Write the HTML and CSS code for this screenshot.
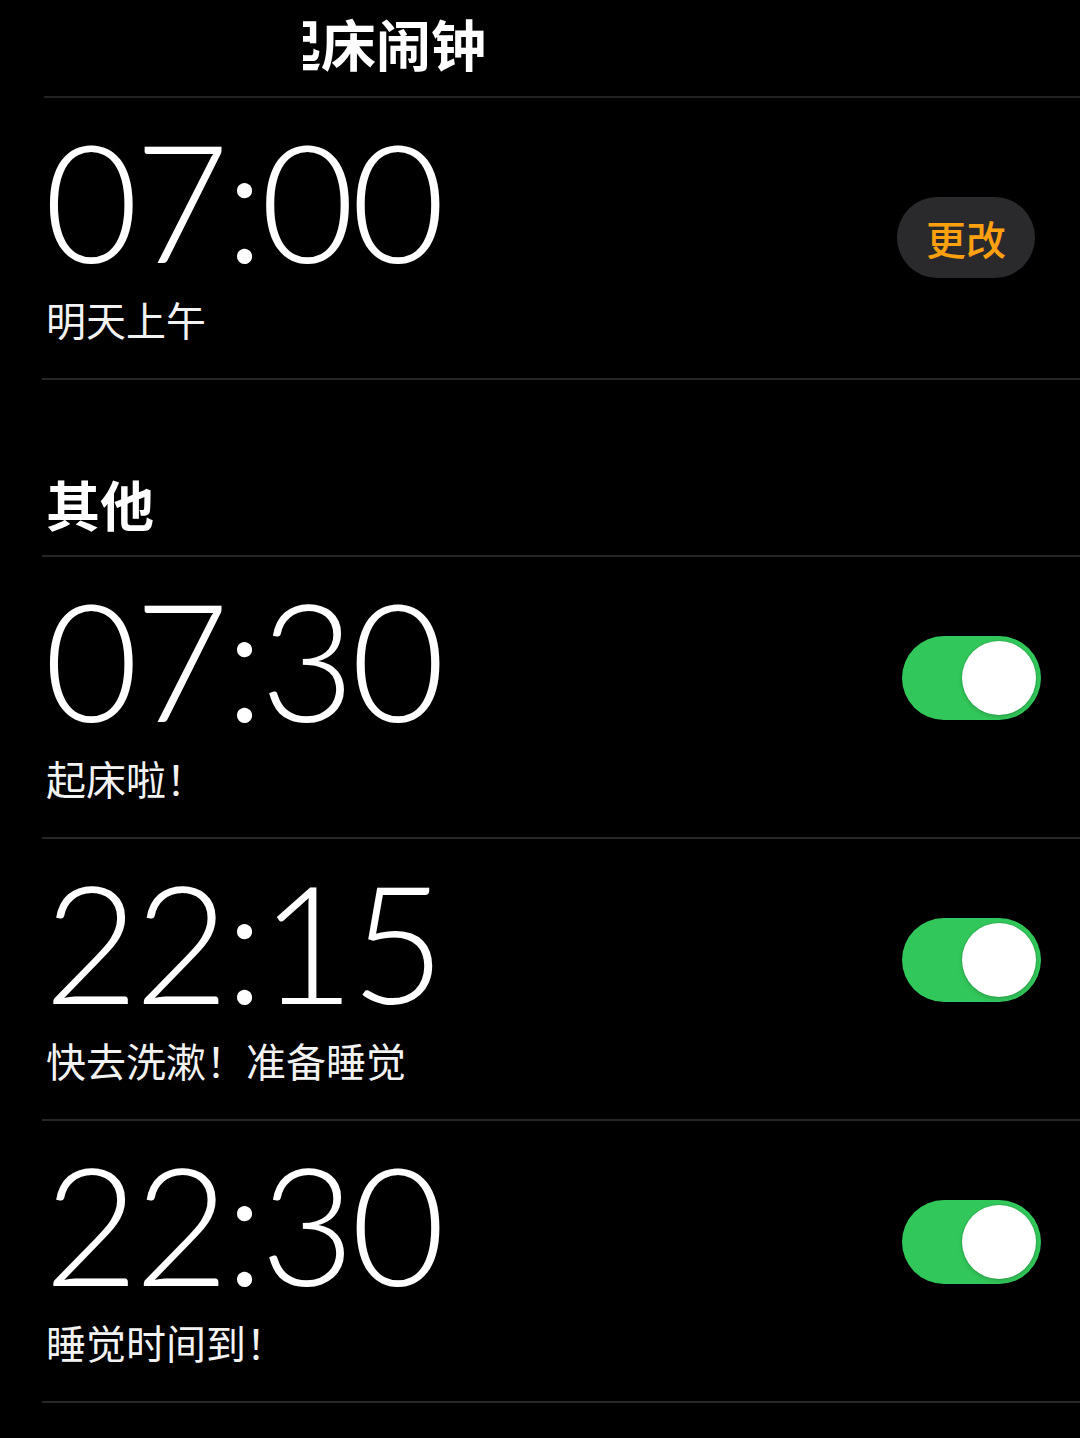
FILE: index.html
```html
<!DOCTYPE html>
<html lang="zh-CN">
<head>
<meta charset="utf-8">
<title>起床闹钟</title>
<link rel="stylesheet" href="styles.css">
</head>
<body>
<div class="screen">
  <header class="nav">
    <h1 class="title">起床闹钟</h1>
    <div class="mask"></div>
  </header>

  <div class="list">
    <div class="row first">
      <div class="info">
        <div class="time">07:00</div>
        <div class="label">明天上午</div>
      </div>
      <button class="change">更改</button>
    </div>
  </div>

  <h2 class="section">其他</h2>

  <div class="list">
    <div class="row">
      <div class="info">
        <div class="time">07:30</div>
        <div class="label">起床啦！</div>
      </div>
      <div class="toggle"><span class="knob"></span></div>
    </div>
    <div class="row">
      <div class="info">
        <div class="time">22:15</div>
        <div class="label">快去洗漱！准备睡觉</div>
      </div>
      <div class="toggle"><span class="knob"></span></div>
    </div>
    <div class="row last">
      <div class="info">
        <div class="time">22:30</div>
        <div class="label">睡觉时间到！</div>
      </div>
      <div class="toggle"><span class="knob"></span></div>
    </div>
  </div>
</div>
</body>
</html>
```

FILE: styles.css
```css
html, body {
  margin: 0;
  padding: 0;
  background: #000;
}

.screen {
  width: 1080px;
  min-height: 1438px;
  background: #000;
  color: #fff;
  font-family: "Noto Sans CJK SC", "Noto Sans", sans-serif;
  overflow: hidden;
}

.nav {
  position: relative;
  height: 96px;
  margin-left: 44px;
  border-bottom: 2px solid #222;
}

.title {
  margin: 0;
  padding-left: 222px;
  font-size: 55px;
  font-weight: 700;
  line-height: 84px;
  letter-spacing: 0;
}

.mask {
  position: absolute;
  left: -44px;
  top: 0;
  width: 303px;
  height: 94px;
  background: #000;
}

.list {
  margin-left: 42px;
}

.row {
  display: flex;
  align-items: flex-start;
  justify-content: space-between;
  padding: 4px 0 33px 4px;
  border-top: 2px solid #262626;
}

.row.first {
  border-top: none;
  border-bottom: 2px solid #262626;
}

.row.last {
  border-bottom: 2px solid #262626;
}

.info {
  display: flex;
  flex-direction: column;
}

.time {
  font-family: "Lato", "Liberation Sans", sans-serif;
  font-weight: 300;
  font-size: 163px;
  line-height: 196px;
  letter-spacing: -4px;
  margin-left: -2px;
  font-variant-numeric: tabular-nums;
}

.label {
  margin-top: 2px;
  font-family: "Liberation Sans", "Noto Sans CJK SC", sans-serif;
  font-size: 40px;
  line-height: 45px;
  font-weight: 400;
  color: #f2f2f2;
}

.change {
  width: 138px;
  height: 81px;
  margin-right: 45px;
  margin-top: 95px;
  border: none;
  border-radius: 41px;
  background: #2a2a2c;
  color: #ffa00f;
  font-family: "Noto Sans CJK SC", sans-serif;
  font-size: 40px;
  font-weight: 500;
  padding: 0;
}

.section {
  margin: 92px 0 19px 46px;
  font-size: 54px;
  font-weight: 700;
  line-height: 64px;
}

.toggle {
  position: relative;
  width: 139px;
  height: 84px;
  margin-right: 39px;
  margin-top: 75px;
  border-radius: 42px;
  background: #32c75a;
}

.knob {
  position: absolute;
  right: 5px;
  top: 5px;
  width: 74px;
  height: 74px;
  border-radius: 50%;
  background: #fff;
  box-shadow: 0 0 0 1px rgba(0, 0, 0, 0.08), 0 2px 4px rgba(0, 0, 0, 0.15);
}
```
